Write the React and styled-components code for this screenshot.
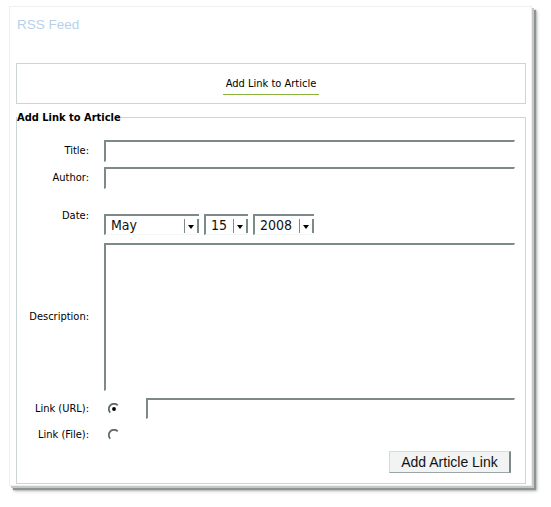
import React from "react";
import styled, { createGlobalStyle } from "styled-components";

const Global = createGlobalStyle`
  html, body { margin: 0; padding: 0; background: #ffffff; }
  body { font-family: "DejaVu Sans Condensed", "Liberation Sans", Arial, sans-serif; color: #000; }
`;

const Page = styled.div`
  padding: 6px 0 0 9px;
  width: 551px;
  height: 507px;
  box-sizing: border-box;
`;

const Panel = styled.div`
  box-sizing: border-box;
  width: 523px;
  height: 480px;
  padding: 10px 5px 0 6px;
  background: #fff;
  border: 1px solid #eef0f0;
  box-shadow: 2px 2px 0 0 #c4c8c8, 4px 4px 1px 0 #8e9393, 5px 5px 3px 0 rgba(60, 60, 60, 0.4);
  display: flex;
  flex-direction: column;
`;

const Title = styled.h1`
  margin: 0 0 0 1px;
  font-family: "Liberation Sans", Arial, sans-serif;
  font-size: 13.5px;
  line-height: 16px;
  font-weight: normal;
  color: #b8d1ea;
`;

const TabBox = styled.div`
  margin-top: 30px;
  height: 41px;
  box-sizing: border-box;
  border: 1px solid #cbd5d5;
  display: flex;
  align-items: center;
  justify-content: center;
`;

const TabLink = styled.a`
  font-size: 11px;
  line-height: 14px;
  color: #000;
  text-decoration: none;
  padding: 0 3px 3px;
  border-bottom: 1px solid #8db33f;
  margin-top: 4px;
`;

const Fieldset = styled.fieldset`
  margin: 7px 0 0 0;
  padding: 16px 10px 10px 0;
  border: 1px solid #cbd5d5;
  min-width: 0;
`;

const Legend = styled.legend`
  padding: 0;
  margin: 0;
  font-size: 11px;
  line-height: 13px;
  font-weight: bold;
`;

const Grid = styled.div`
  display: grid;
  grid-template-columns: 72px 1fr;
  column-gap: 15px;
  align-items: center;
`;

const Label = styled.label`
  font-size: 11px;
  line-height: 14px;
  text-align: right;
  margin-top: ${(p) => p.$mt || 0}px;
  align-self: ${(p) => (p.$start ? "start" : "center")};
`;

const Cell = styled.div`
  margin-top: ${(p) => p.$mt || 0}px;
  display: flex;
  align-items: center;
  min-width: 0;
`;

const TextInput = styled.div`
  box-sizing: border-box;
  flex: 1;
  height: ${(p) => p.$h || 22}px;
  margin-left: ${(p) => p.$ml || 0}px;
  border-top: 2px solid #7c8a8a;
  border-left: 2px solid #7c8a8a;
  border-right: 1px solid transparent;
  border-bottom: 1px solid transparent;
  background: #fff;
`;

const SelectRow = styled.div`
  display: flex;
  gap: 5px;
`;

const Select = styled.div`
  box-sizing: border-box;
  width: ${(p) => p.$w}px;
  height: 21px;
  display: flex;
  align-items: stretch;
  border-top: 2px solid #7c8a8a;
  border-left: 2px solid #7c8a8a;
  border-bottom: 1px solid #f4f6f6;
  background: #fff;
`;

const SelectText = styled.span`
  flex: 1;
  padding-left: 5px;
  font-size: 14px;
  line-height: 19px;
  color: #111;
`;

const Arrow = styled.span`
  width: 12px;
  margin-top: 3px;
  margin-bottom: 1px;
  border-left: 1px solid #7c8a8a;
  border-right: 2px solid #7c8a8a;
  display: flex;
  align-items: center;
  justify-content: center;
  &::after {
    content: "";
    width: 0;
    height: 0;
    border-left: 3.5px solid transparent;
    border-right: 3.5px solid transparent;
    border-top: 4px solid #000;
    margin-top: 1px;
  }
`;

const RadioWrap = styled.span`
  display: inline-flex;
  width: 12px;
  height: 12px;
  margin-left: 4px;
`;

const ButtonRow = styled.div`
  grid-column: 2;
  display: flex;
  justify-content: flex-end;
  margin-top: 7px;
  padding-right: 4px;
`;

const Button = styled.button`
  box-sizing: border-box;
  width: 122px;
  height: 22px;
  padding: 0;
  font-family: "Liberation Sans", Arial, sans-serif;
  font-size: 14px;
  color: #111;
  background: #f2f3f3;
  border: 1px solid #d6dada;
  border-right: 2px solid #7c8a8a;
  border-bottom: 1px solid #9aa5a5;
`;

function Radio({ checked }) {
  return (
    <RadioWrap>
      <svg width="12" height="12" viewBox="0 0 12 12">
        <path
          d="M2.3 9.7 A5 5 0 0 1 9.7 2.3"
          fill="none"
          stroke="#5f6a6a"
          strokeWidth="1.8"
        />
        {checked && <circle cx="6" cy="6" r="1.9" fill="#000" />}
      </svg>
    </RadioWrap>
  );
}

export default function App() {
  return (
    <>
      <Global />
      <Page>
        <Panel>
          <Title>RSS Feed</Title>
          <TabBox>
            <TabLink href="#">Add Link to Article</TabLink>
          </TabBox>
          <Fieldset>
            <Legend>Add Link to Article</Legend>
            <Grid>
              <Label>Title:</Label>
              <Cell>
                <TextInput />
              </Cell>

              <Label $mt={5}>Author:</Label>
              <Cell $mt={5}>
                <TextInput />
              </Cell>

              <Label $start $mt={20}>Date:</Label>
              <Cell $mt={25}>
                <SelectRow>
                  <Select $w={95}>
                    <SelectText>May</SelectText>
                    <Arrow />
                  </Select>
                  <Select $w={44}>
                    <SelectText>15</SelectText>
                    <Arrow />
                  </Select>
                  <Select $w={61}>
                    <SelectText>2008</SelectText>
                    <Arrow />
                  </Select>
                </SelectRow>
              </Cell>

              <Label $mt={8}>Description:</Label>
              <Cell $mt={8}>
                <TextInput $h={148} />
              </Cell>

              <Label $mt={7}>Link (URL):</Label>
              <Cell $mt={7}>
                <Radio checked />
                <TextInput $h={21} $ml={26} />
              </Cell>

              <Label $mt={7}>Link (File):</Label>
              <Cell $mt={7}>
                <Radio />
                <span style={{ height: 18 }} />
              </Cell>

              <ButtonRow>
                <Button>Add Article Link</Button>
              </ButtonRow>
            </Grid>
          </Fieldset>
        </Panel>
      </Page>
    </>
  );
}
